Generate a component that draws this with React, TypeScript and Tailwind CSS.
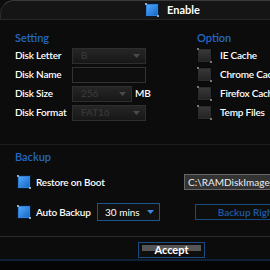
import React from "react";

function BlueCheck() {
  return (
    <div className="relative size-[14px] shrink-0 border border-[#0a1a2e] bg-gradient-to-br from-[#52aeff] to-[#1463c4] shadow-[inset_0_0_0_1px_#2f7fd8]">
      <span className="absolute -left-px -top-px size-[2px] bg-[#9ab]" />
      <span className="absolute -right-px -bottom-px size-[2px] bg-[#9ab]" />
    </div>
  );
}

function GrayCheck() {
  return (
    <div className="relative size-[15px] shrink-0 border border-[#0a0a0a] bg-gradient-to-b from-[#3a3a3a] to-[#222] shadow-[inset_0_0_0_1px_#2c2c2c]">
      <span className="absolute -left-px -top-px size-[2px] bg-[#777]" />
      <span className="absolute -right-px -bottom-px size-[2px] bg-[#777]" />
    </div>
  );
}

function DimSelect({ value, w }: { value: string; w: string }) {
  return (
    <div
      className={`flex h-[16px] items-center justify-between border border-[#2e2e2e] bg-gradient-to-b from-[#262626] to-[#171717] pl-2 pr-[5px] text-[10px] text-[#3c3c3c] ${w}`}
    >
      <span>{value}</span>
      <svg width="7" height="4" viewBox="0 0 7 4">
        <path d="M0 0h7L3.5 4z" fill="#4a4a4a" />
      </svg>
    </div>
  );
}

export default function App() {
  const labels = ["Disk Letter", "Disk Name", "Disk Size", "Disk Format"];
  const options = ["IE Cache", "Chrome Cache", "Firefox Cache", "Temp Files"];

  return (
    <div className="h-[270px] w-[270px] overflow-hidden bg-[#0c0c0c] font-['Lato',sans-serif] text-white">
      <div className="w-[360px]">
        {/* title bar */}
        <div className="flex h-[20px] items-center rounded-tl-[14px] border-t border-l border-b border-t-[#3a3a3a] border-l-[#2a2a2a] border-b-[#262626] bg-[#151515] pl-[144px]">
          <BlueCheck />
          <span className="ml-[8px] text-[11px] font-bold">Enable</span>
        </div>

        {/* setting + option */}
        <div className="flex pt-[11px]">
          <div className="w-[197px] pl-[15px]">
            <div className="h-[14px] text-[11px] leading-[14px] font-semibold text-[#2468c4]">Setting</div>
            <div className="mt-[1px] flex flex-col">
              {labels.map((l, i) => (
                <div key={l} className="flex h-[19px] items-center">
                  <span className="w-[57px] text-[10px] font-semibold tracking-[-0.2px]">{l}</span>
                  {i === 0 && <DimSelect value="B" w="w-[74px]" />}
                  {i === 1 && <div className="h-[16px] w-[74px] border border-[#333] bg-[#0e0e0e]" />}
                  {i === 2 && (
                    <>
                      <DimSelect value="256" w="w-[60px]" />
                      <span className="ml-[3px] text-[10px] font-semibold">MB</span>
                    </>
                  )}
                  {i === 3 && <DimSelect value="FAT16" w="w-[74px]" />}
                </div>
              ))}
            </div>
          </div>
          <div>
            <div className="h-[14px] text-[11px] leading-[14px] font-semibold text-[#2468c4]">Option</div>
            <div className="mt-[1px] flex flex-col">
              {options.map((o) => (
                <div key={o} className="flex h-[19px] items-center">
                  <GrayCheck />
                  <span className="ml-[8px] whitespace-nowrap text-[10px] font-semibold tracking-[-0.2px]">{o}</span>
                </div>
              ))}
            </div>
          </div>
        </div>

        <div className="mt-[22px] border-t border-[#1c1c1c]" />

        {/* backup */}
        <div className="pl-[15px] pt-[5px]">
          <div className="h-[14px] text-[11px] leading-[14px] font-semibold text-[#2468c4]">Backup</div>
          <div className="mt-[10px] flex h-[16px] items-center">
            <div className="flex w-[169px] items-center pl-[2px]">
              <BlueCheck />
              <span className="ml-[5px] text-[10px] font-semibold tracking-[-0.2px]">Restore on Boot</span>
            </div>
            <div className="flex h-[16px] w-[120px] items-center border border-[#666] bg-[#333] pl-[3px] text-[10px] whitespace-nowrap text-[#eee]">
              C:\RAMDiskImage.img
            </div>
          </div>
          <div className="mt-[13px] flex h-[18px] items-center">
            <div className="flex w-[82px] items-center pl-[2px]">
              <BlueCheck />
              <span className="ml-[5px] text-[10px] font-semibold tracking-[-0.2px]">Auto Backup</span>
            </div>
            <div className="flex h-[18px] w-[63px] items-center justify-between border border-[#1d5594] bg-[#101010] pl-[7px] pr-[5px] text-[10px]">
              <span>30 mins</span>
              <svg width="7" height="4" viewBox="0 0 7 4">
                <path d="M0 0h7L3.5 4z" fill="#3a8ae0" />
              </svg>
            </div>
            <div className="ml-[35px] flex h-[16px] w-[104px] items-center justify-center border border-[#1a4a80] bg-[#0e0e0e] text-[10px] font-semibold text-[#1d5aa5]">
              Backup Right
            </div>
          </div>
        </div>

        <div className="mt-[15px] border-t border-[#2a2a2a]" />

        {/* accept */}
        <div className="flex h-[22px] items-start pt-[5px] pl-[138px]">
          <div className="relative flex h-[16px] w-[67px] items-center justify-center border border-[#1a4a80] bg-[#0e0e0e]">
            <div className="absolute inset-x-[3px] top-[2px] h-[6px] bg-[#555]" />
            <span className="relative text-[11px] font-bold">Accept</span>
          </div>
        </div>
        <div className="h-[2px] bg-[#10223a]" />
        <div className="h-[20px] bg-[#050505]" />
      </div>
    </div>
  );
}
